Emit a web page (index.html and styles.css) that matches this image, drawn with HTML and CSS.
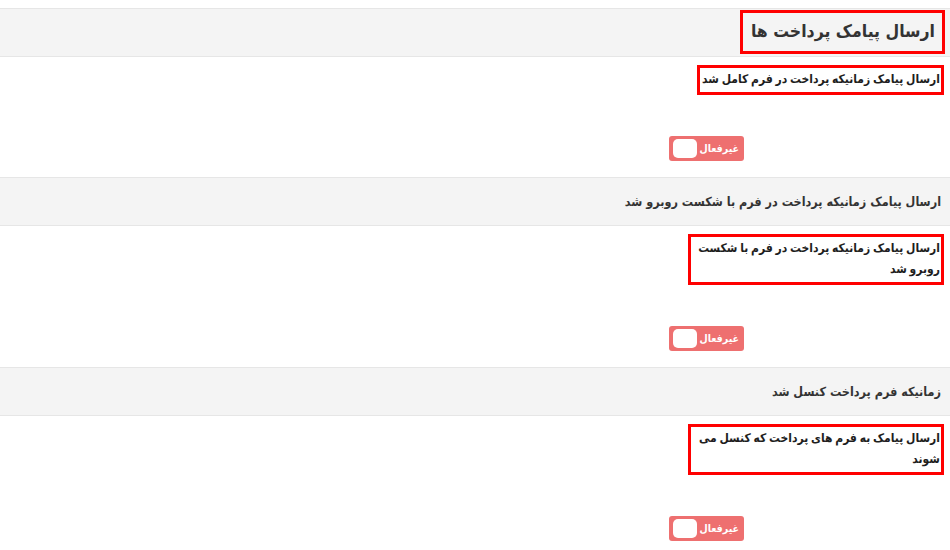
FILE: index.html
```html
<!DOCTYPE html>
<html lang="fa" dir="rtl">
<head>
<meta charset="utf-8">
<title>ارسال پیامک پرداخت ها</title>
<link rel="stylesheet" href="styles.css">
</head>
<body>
<div class="panel">
  <div class="band band-title">
    <h2 class="title-box">ارسال پیامک پرداخت ها</h2>
  </div>
  <div class="section">
    <div class="label-box">ارسال پیامک زمانیکه پرداخت در فرم کامل شد</div>
    <div class="toggle-row">
      <span class="toggle"><span class="toggle-text">غیرفعال</span><span class="knob"></span></span>
    </div>
  </div>
  <div class="band"><h3 class="band-text">ارسال پیامک زمانیکه پرداخت در فرم با شکست روبرو شد</h3></div>
  <div class="section">
    <div class="label-box">ارسال پیامک زمانیکه پرداخت در فرم با شکست روبرو شد</div>
    <div class="toggle-row">
      <span class="toggle"><span class="toggle-text">غیرفعال</span><span class="knob"></span></span>
    </div>
  </div>
  <div class="band"><h3 class="band-text">زمانیکه فرم پرداخت کنسل شد</h3></div>
  <div class="section">
    <div class="label-box">ارسال پیامک به فرم های پرداخت که کنسل می شوند</div>
    <div class="toggle-row">
      <span class="toggle"><span class="toggle-text">غیرفعال</span><span class="knob"></span></span>
    </div>
  </div>
</div>
</body>
</html>
```
FILE: styles.css
```css
html, body {
  background: #ffffff;
}
body {
  margin: 8px 0 0;
  font-family: "DejaVu Sans Condensed", "DejaVu Sans", Tahoma, sans-serif;
  color: #2b2b2b;
  direction: rtl;
}
.panel {
  display: flex;
  flex-direction: column;
}
.band {
  background: #f4f4f4;
  border-top: 1px solid #e6e6e6;
  border-bottom: 1px solid #e6e6e6;
  height: 49px;
  box-sizing: border-box;
  display: flex;
  align-items: center;
  padding-right: 9px;
}
.band-title {
  align-items: flex-start;
  padding-top: 1px;
  padding-right: 5px;
}
.title-box {
  margin: 0;
  border: 3px solid #ff0000;
  height: 44px;
  box-sizing: border-box;
  padding: 0 7px 0 8px;
  font-size: 17.5px;
  font-weight: bold;
  line-height: 37px;
  color: #333;
}
.band-text {
  margin: 0;
  font-size: 12.5px;
  font-weight: bold;
  color: #333;
}
.section {
  padding: 8px 6px 16px 0;
  display: flex;
  flex-direction: column;
  align-items: flex-start;
}
.label-box {
  border: 3px solid #ff0000;
  box-sizing: border-box;
  max-width: 256px;
  padding: 1px 1px 1px 2px;
  font-size: 12px;
  word-spacing: -1px;
  font-weight: bold;
  line-height: 21.5px;
  color: #1e1e1e;
}
.toggle-row {
  margin-top: 41px;
  padding-right: 200px;
}
.toggle {
  display: flex;
  align-items: center;
  width: 75px;
  height: 25px;
  box-sizing: border-box;
  background: #ee7070;
  border-radius: 3px;
  padding: 0 5px 0 4px;
  justify-content: space-between;
}
.toggle-text {
  color: #ffffff;
  font-size: 10.5px;
  font-weight: bold;
}
.knob {
  width: 24px;
  height: 19px;
  background: #ffffff;
  border-radius: 5px;
}
```
